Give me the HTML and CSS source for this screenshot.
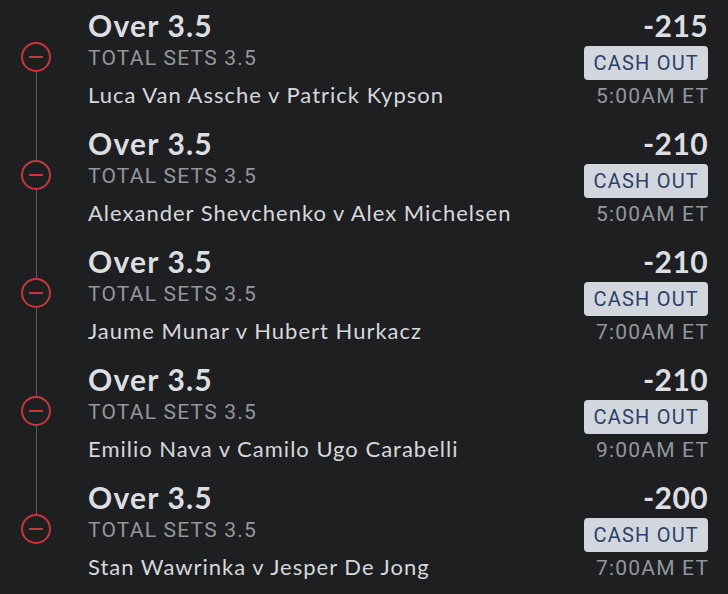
FILE: index.html
```html
<!DOCTYPE html>
<html>
<head>
<meta charset="utf-8">
<link rel="stylesheet" href="styles.css">
</head>
<body>
<div class="list">
  <div class="leg first">
    <div class="rail"><span class="seg top"></span><span class="dot"></span><span class="seg bottom"></span></div>
    <div class="info">
      <div class="title">Over 3.5</div>
      <div class="market">TOTAL SETS 3.5</div>
      <div class="match">Luca Van Assche v Patrick Kypson</div>
    </div>
    <div class="side">
      <div class="odds">-215</div>
      <div class="cash">CASH OUT</div>
      <div class="time">5:00AM ET</div>
    </div>
  </div>
  <div class="leg">
    <div class="rail"><span class="seg top"></span><span class="dot"></span><span class="seg bottom"></span></div>
    <div class="info">
      <div class="title">Over 3.5</div>
      <div class="market">TOTAL SETS 3.5</div>
      <div class="match">Alexander Shevchenko v Alex Michelsen</div>
    </div>
    <div class="side">
      <div class="odds">-210</div>
      <div class="cash">CASH OUT</div>
      <div class="time">5:00AM ET</div>
    </div>
  </div>
  <div class="leg">
    <div class="rail"><span class="seg top"></span><span class="dot"></span><span class="seg bottom"></span></div>
    <div class="info">
      <div class="title">Over 3.5</div>
      <div class="market">TOTAL SETS 3.5</div>
      <div class="match">Jaume Munar v Hubert Hurkacz</div>
    </div>
    <div class="side">
      <div class="odds">-210</div>
      <div class="cash">CASH OUT</div>
      <div class="time">7:00AM ET</div>
    </div>
  </div>
  <div class="leg">
    <div class="rail"><span class="seg top"></span><span class="dot"></span><span class="seg bottom"></span></div>
    <div class="info">
      <div class="title">Over 3.5</div>
      <div class="market">TOTAL SETS 3.5</div>
      <div class="match">Emilio Nava v Camilo Ugo Carabelli</div>
    </div>
    <div class="side">
      <div class="odds">-210</div>
      <div class="cash">CASH OUT</div>
      <div class="time">9:00AM ET</div>
    </div>
  </div>
  <div class="leg last">
    <div class="rail"><span class="seg top"></span><span class="dot"></span><span class="seg bottom"></span></div>
    <div class="info">
      <div class="title">Over 3.5</div>
      <div class="market">TOTAL SETS 3.5</div>
      <div class="match">Stan Wawrinka v Jesper De Jong</div>
    </div>
    <div class="side">
      <div class="odds">-200</div>
      <div class="cash">CASH OUT</div>
      <div class="time">7:00AM ET</div>
    </div>
  </div>
</div>
</body>
</html>
```
FILE: styles.css
```css
html, body {
  margin: 0;
  padding: 0;
  background: #1e1f20;
}
.list {
  display: flex;
  flex-direction: column;
  padding-right: 20px;
}
.leg {
  display: grid;
  grid-template-columns: 72px 1fr auto;
  column-gap: 16px;
  height: 118px;
}
.rail {
  display: flex;
  flex-direction: column;
  align-items: center;
}
.seg {
  width: 1px;
  background: #5a5b5c;
}
.seg.top { height: 42px; }
.seg.bottom { flex: 1; }
.first .seg.top, .last .seg.bottom { background: transparent; }
.dot {
  position: relative;
  width: 26px;
  height: 26px;
  border: 2px solid #c9363c;
  border-radius: 50%;
  flex: none;
}
.dot::after {
  content: "";
  position: absolute;
  left: 6px;
  top: 12px;
  width: 14px;
  height: 2px;
  background: #c9363c;
}
.info, .side {
  padding-top: 6px;
}
.side {
  display: flex;
  flex-direction: column;
  align-items: flex-end;
}
.title, .odds {
  font-family: Lato, "Noto Sans", sans-serif;
  font-weight: 700;
  font-size: 30px;
  line-height: 38px;
  letter-spacing: 1.2px;
  color: #dcdee1;
}
.odds { letter-spacing: 0.4px; }
.market, .time {
  font-family: Roboto, "Liberation Sans", sans-serif;
  font-size: 21px;
  line-height: 28px;
  letter-spacing: 1.2px;
  color: #93979c;
}
.time {
  margin-top: 2px;
  margin-right: -1.2px;
}
.match {
  margin-top: 8px;
  font-family: Lato, "Noto Sans", sans-serif;
  font-size: 22px;
  line-height: 30px;
  letter-spacing: 1px;
  color: #d6d8db;
}
.cash {
  margin-top: 2px;
  height: 34px;
  box-sizing: border-box;
  padding: 0 9px 0 10px;
  background: #d2d7dd;
  border-radius: 4px;
  font-family: Roboto, "Liberation Sans", sans-serif;
  font-size: 20px;
  line-height: 34px;
  letter-spacing: 1.2px;
  color: #2d4068;
}
```
